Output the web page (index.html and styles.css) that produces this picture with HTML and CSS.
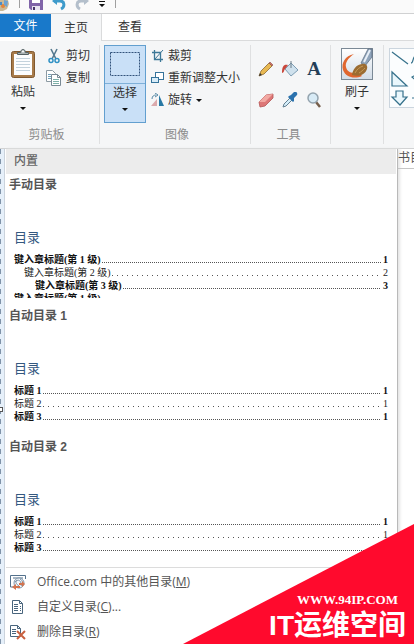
FILE: index.html
```
<!DOCTYPE html>
<html lang="zh-CN">
<head>
    <meta charset="UTF-8">
    <title>目录</title>
    <link rel="stylesheet" href="styles.css">
</head>
<body>

<div class="app">
    <div class="quickbar">
        <svg class="quick-palette" width="10" height="12" viewBox="0 0 10 12">
            <path d="M0 0h8l1 4-2 5-4 2H0z" fill="#c9b896"/>
            <circle cx="3" cy="6" r="2" fill="#e0853c"/>
            <path d="M4 0l4 1-1 6-3-2z" fill="#6da3d2"/>
            <path d="M0 2h2v3H0z" fill="#4a8cc8"/>
        </svg>
        <span class="quick-line"></span>
        <button class="quick-btn" aria-label="保存">
            <svg width="14" height="12" viewBox="0 0 14 12">
                <path d="M0 0h14v10H2L0 8z" fill="#8064a8"/>
                <path d="M3 0h8v3H3z" fill="#fff"/>
                <path d="M3 6h8v4H3z" fill="#e8e4f0"/>
                <path d="M4 7h2v3H4z" fill="#453368"/>
            </svg>
        </button>
        <button class="quick-btn" aria-label="撤消">
            <svg width="14" height="12" viewBox="0 0 14 12">
                <path d="M2 1h6c5 0 5 6 1 8" fill="none" stroke="#3f9bcb" stroke-width="3"/>
                <path d="M0 1l5-4v8z" fill="#3f9bcb"/>
            </svg>
        </button>
        <button class="quick-btn" aria-label="重做">
            <svg width="14" height="12" viewBox="0 0 14 12">
                <path d="M12 1H6C1 1 1 7 5 9" fill="none" stroke="#b4bfcb" stroke-width="3"/>
                <path d="M14 1L9-3v8z" fill="#b4bfcb"/>
            </svg>
        </button>
        <button class="quick-btn" aria-label="自定义快速访问工具栏">
            <svg width="8" height="8" viewBox="0 0 8 8"><path d="M1 1h6v1H1zM1 4h6L4 7z" fill="#111"/></svg>
        </button>
        <span class="quick-line"></span>
    </div>

    <div class="tabs">
        <button class="tab file">文件</button>
        <button class="tab home">主页</button>
        <button class="tab view">查看</button>
    </div>

    <div class="ribbon">
        <div class="group clipboard">
            <div class="group-body">
                <button class="big-btn">
                    <svg class="big-icon" width="26" height="32" viewBox="0 0 26 32">
                        <rect x="1.500" y="3.500" width="23" height="26" rx="2" fill="#a87b4a" stroke="#80592f"/>
                        <path d="M4 6h18v21H4z" fill="#fcfdfe"/>
                        <path d="M6 10.500h14M6 13.500h14M6 16.500h14M6 19.500h14M6 22.500h14" stroke="#c3d2dc"/>
                        <path d="M7.500 6.500V4.500h3c0-4 5-4 5 0h3v2z" fill="#a9b2b3" stroke="#566264"/>
                        <circle cx="13" cy="3.500" r="1" fill="#fff"/>
                    </svg>
                    <span class="big-text">粘贴</span>
                    <span class="caret"></span>
                </button>
                <div class="rows">
                    <button class="row-btn">
                        <svg width="16" height="16" viewBox="0 0 16 16">
                            <path d="M5 1l5 10M11 1L6 11" stroke="#54798f" stroke-width="1.600"/>
                            <circle cx="5" cy="12.500" r="2" fill="none" stroke="#2f91c4" stroke-width="1.500"/>
                            <circle cx="11" cy="12.500" r="2" fill="none" stroke="#2f91c4" stroke-width="1.500"/>
                        </svg>
                        剪切
                    </button>
                    <button class="row-btn">
                        <svg width="16" height="16" viewBox="0 0 16 16">
                            <path d="M.5 .5h6l3 3v8h-9z" fill="#fff" stroke="#8c9aa3"/>
                            <path d="M2 4.500h3M2 6.500h3M2 8.500h3" stroke="#6fa1bb"/>
                            <path d="M5.500 4.500h6l3 3v8h-9z" fill="#fff" stroke="#788994"/>
                            <path d="M11.500 4.500v3h3" fill="none" stroke="#788994"/>
                            <path d="M7 9.500h6M7 11.500h6M7 13.500h6" stroke="#7db0a8"/>
                        </svg>
                        复制
                    </button>
                </div>
            </div>
            <div class="group-name">剪贴板</div>
        </div>

        <div class="group image">
            <div class="group-body">
                <button class="select-btn">
                    <span class="select-top">
                        <svg width="30" height="24" viewBox="0 0 30 24">
                            <rect x=".5" y=".5" width="29" height="23" fill="none" stroke="#31527a" stroke-dasharray="2 1"/>
                        </svg>
                    </span>
                    <span class="big-text">选择</span>
                    <span class="caret"></span>
                </button>
                <div class="rows">
                    <button class="row-btn">
                        <svg width="13" height="14" viewBox="0 0 13 14">
                            <path d="M3.500 1v9.500H12M1 3.500h8.500V13" fill="none" stroke="#3d7897" stroke-width="1.300"/>
                            <path d="M4 10l8-9" stroke="#3d7897"/>
                        </svg>
                        裁剪
                    </button>
                    <button class="row-btn">
                        <svg width="13" height="14" viewBox="0 0 13 14">
                            <rect x="4.500" y="1.500" width="8" height="7" fill="#fff" stroke="#35739a"/>
                            <rect x=".5" y="6.500" width="7" height="5" fill="#d8ecf8" stroke="#35739a"/>
                        </svg>
                        重新调整大小
                    </button>
                    <button class="row-btn">
                        <svg width="13" height="14" viewBox="0 0 13 14">
                            <path d="M6 6v7H0z" fill="#dba9ac"/>
                            <path d="M8 2v11h5z" fill="#2878a4"/>
                            <path d="M1 6c0-3 2-4 4-4M4 0l3 2-3 2" fill="none" stroke="#5588a5"/>
                        </svg>
                        旋转
                        <span class="caret"></span>
                    </button>
                </div>
            </div>
            <div class="group-name">图像</div>
        </div>

        <div class="group tools">
            <div class="group-body tool-grid">
                <button aria-label="铅笔">
                    <svg width="16" height="16" viewBox="0 0 16 16">
                        <path d="M1 15l2-5 8-8 3 3-8 8z" fill="#e8b953" stroke="#8c6a32" stroke-width=".8"/>
                        <path d="M11 2l1-1 3 3-1 1z" fill="#cf7066" stroke="#8c514a" stroke-width=".6"/>
                        <path d="M1 15l1-3 2 2z" fill="#333"/>
                    </svg>
                </button>
                <button aria-label="填充">
                    <svg width="16" height="16" viewBox="0 0 16 16">
                        <path d="M9 2l7 7-7 6-6-7z" fill="#cfe1ed" stroke="#7d9db3"/>
                        <path d="M9 0v7" stroke="#6b7d88"/>
                        <path d="M6 4C2 3 0 5 0 12c2 0 2-3 3-4z" fill="#c9473b"/>
                    </svg>
                </button>
                <button class="letter" aria-label="文本">A</button>
                <button aria-label="橡皮擦">
                    <svg width="16" height="16" viewBox="0 0 16 16">
                        <path d="M1 10l7-7 7-1v4l-8 8-5 1z" fill="#dd7777" stroke="#b25555" stroke-width=".8"/>
                        <path d="M1 10l7-7 7-1-8 8z" fill="#f2a9a3"/>
                    </svg>
                </button>
                <button aria-label="取色器">
                    <svg width="16" height="16" viewBox="0 0 16 16">
                        <path d="M1 15l1-3 6-6 2 2-6 6z" fill="#d4edf9" stroke="#637f91"/>
                        <path d="M7 4l2-1 3-3c2-1 4 1 3 3l-3 3 0 3-1 1-5-5z" fill="#2b72ae"/>
                    </svg>
                </button>
                <button aria-label="放大镜">
                    <svg width="16" height="16" viewBox="0 0 16 16">
                        <path d="M10 10l4 5" stroke="#755e4b" stroke-width="2.500"/>
                        <circle cx="7" cy="6" r="5" fill="#d8ebf6" stroke="#93a3ae" stroke-width="1.500"/>
                    </svg>
                </button>
            </div>
            <div class="group-name">工具</div>
        </div>

        <div class="group brushes">
            <button class="big-btn">
                <svg class="big-icon" width="32" height="32" viewBox="0 0 32 32">
                    <defs>
                        <linearGradient id="sky" x1="0" y1="0" x2="0" y2="1">
                            <stop offset="0" stop-color="#fff"/>
                            <stop offset="1" stop-color="#d2dce7"/>
                        </linearGradient>
                    </defs>
                    <rect x=".5" y=".5" width="31" height="31" fill="url(#sky)" stroke="#7b8996"/>
                    <path d="M13 6C4 8 0 15 2 22c3 8 12 9 19 6l-4-4c-6 2-11 0-12-5-1-4 2-9 8-13z" fill="#e0662f"/>
                    <path d="M20 15l7-14h4v8l-7 9z" fill="#8fa4bb" stroke="#56677c" stroke-width=".7"/>
                    <path d="M23 14l6-12" stroke="#e7eef7" stroke-width="2"/>
                    <path d="M11 27c1-6 4-10 10-11 4-1 6 2 5 5-2 6-8 8-15 6z" fill="#9b6c32"/>
                    <path d="M14 25c2-4 5-6 8-7M18 25c2-1 4-3 6-5" stroke="#c69b57" fill="none"/>
                </svg>
                <span class="big-text">刷子</span>
                <span class="caret"></span>
            </button>
        </div>

        <div class="group shapes">
            <svg class="gallery" width="40" height="60" viewBox="0 0 40 60">
                <rect x=".5" y=".5" width="50" height="59" fill="#fbfdfe" stroke="#cbd5de"/>
                <g fill="#eaf7fc" stroke="#35718b" stroke-width="1.200">
                    <path d="M3 4l16 12M3 24v14h15z"/>
                    <path d="M7 43h7v6h4l-7 8-8-8h4z"/>
                    <path d="M27 8c-4 0-2 7-5 7M30 25l-7 4 7 6M30 50h-7" fill="none"/>
                </g>
            </svg>
        </div>
    </div>

    <div class="workspace">
        <div class="ruler"><span class="handle"></span></div>
        <div class="menu">
            <div class="menu-head">内置</div>

            <button class="toc">
                <span class="toc-name">手动目录</span>
                <span class="toc-title">目录</span>
                <span class="toc-line strong">键入章标题(第 1 级)<i class="dots"></i>1</span>
                <span class="toc-line level2">键入章标题(第 2 级)<i class="dots wide"></i>2</span>
                <span class="toc-line strong level3">键入章标题(第 3 级)<i class="dots"></i>3</span>
                <span class="toc-line strong cut">键入章标题(第 1 级)</span>
            </button>

            <button class="toc">
                <span class="toc-name">自动目录 1</span>
                <span class="toc-title">目录</span>
                <span class="toc-line strong">标题 1<i class="dots"></i>1</span>
                <span class="toc-line">标题 2<i class="dots wide"></i>1</span>
                <span class="toc-line strong">标题 3<i class="dots"></i>1</span>
            </button>

            <button class="toc">
                <span class="toc-name">自动目录 2</span>
                <span class="toc-title">目录</span>
                <span class="toc-line strong">标题 1<i class="dots"></i>1</span>
                <span class="toc-line">标题 2<i class="dots wide"></i>1</span>
                <span class="toc-line strong">标题 3<i class="dots"></i>1</span>
            </button>

            <div class="commands">
                <button class="command">
                    <svg width="16" height="16" viewBox="0 0 16 16">
                        <path d="M.5 13V1.500h15V5M.5 13H3M3 4h10" fill="none" stroke="#53718c"/>
                        <circle cx="9" cy="9" r="5" fill="#f4f7fa" stroke="#7e95a9"/>
                        <path d="M5 8c3-3 5-2 6 1M7 6c-2 2-1 4 2 6M10 5c3 2 3 4 1 7" fill="none" stroke="#7e95a9"/>
                        <path d="M2 13l4-3v2h4v2H6v2zM15 10l-3-3v2H9v2h3v2z" fill="#d27450"/>
                    </svg>
                    <span>Office.com 中的其他目录(<u>M</u>)</span>
                </button>
                <button class="command">
                    <svg width="16" height="16" viewBox="0 0 16 16">
                        <path d="M2.500 1.500h7l3 3v10h-10z" fill="#fff" stroke="#49657d"/>
                        <path d="M9.500 1.500v3h3" fill="none" stroke="#49657d"/>
                        <path d="M4 5.500h4M4 7.500h4M4 9.500h4M4 11.500h4M10 7.500h1M10 9.500h1M10 11.500h1" stroke="#49657d"/>
                    </svg>
                    <span>自定义目录(<u>C</u>)...</span>
                </button>
                <button class="command">
                    <svg width="16" height="16" viewBox="0 0 16 16">
                        <path d="M.5 1.500h7l3 3v8H.5z" fill="#fff" stroke="#49657d"/>
                        <path d="M7.500 1.500v3h3M2 5.500h4M2 7.500h4M2 9.500h4" fill="none" stroke="#49657d"/>
                        <path d="M7 7l8 8M15 7l-8 8" stroke="#c8603f" stroke-width="2"/>
                    </svg>
                    <span>删除目录(<u>R</u>)</span>
                </button>
            </div>
        </div>
        <div class="page"><div class="page-tab">书目</div></div>
    </div>

    <div class="badge">
        <div class="badge-url">WWW.94IP.COM</div>
        <div class="badge-name">IT运维空间</div>
    </div>
</div>

</body>
</html>
```
FILE: styles.css
```
* {
    box-sizing: border-box;
}

body {
    margin: 0;
    font-family: "Liberation Sans", "Noto Sans CJK SC", sans-serif;
    font-size: 12px;
    line-height: 16px;
    color: #333;
}

button {
    margin: 0;
    padding: 0;
    border: none;
    background: none;
    font: inherit;
    color: inherit;
}

svg {
    display: block;
    flex: none;
}

.app {
    position: relative;
    display: flex;
    flex-direction: column;
    height: 100vh;
    overflow: hidden;
    background: #fff;
}

/* quick access bar */
.quickbar {
    display: flex;
    flex: none;
    gap: 9px;
    height: 14px;
    background: #fafafa;
    border-bottom: 1px solid #d0d1d2;
    overflow: hidden;
}

.quick-btn {
    display: flex;
    align-items: flex-start;
}

.quick-line {
    width: 1px;
    height: 8px;
    background: #a0a0a0;
}

/* tabs */
.tabs {
    display: flex;
    flex: none;
    height: 27px;
}

.tab {
    width: 51px;
    height: 27px;
}

.file {
    height: 23px;
    background: #1979ca;
    color: #fff;
}

.home {
    background: #f5f6f7;
    border-right: 1px solid #dadbdc;
}

.view {
    flex: 1;
    padding-left: 16px;
    border-bottom: 1px solid #dadbdc;
    text-align: left;
}

/* ribbon */
.ribbon {
    display: flex;
    flex: none;
    height: 108px;
    padding-top: 4px;
    background: #f5f6f7;
    border-bottom: 1px solid #d2d3d4;
    overflow: hidden;
}

.group {
    display: flex;
    flex: none;
    flex-direction: column;
    height: 99px;
    border-right: 1px solid #dfe0e1;
}

.group-body {
    display: flex;
    height: 82px;
}

.group-name {
    padding-top: 2px;
    line-height: 18px;
    text-align: center;
    color: #8c8c8c;
}

.clipboard {
    width: 100px;
}

.clipboard .group-name {
    padding-right: 6px;
}

.image {
    width: 151px;
    padding-left: 4px;
}

.tools {
    width: 80px;
}

.tools .group-name {
    padding-right: 4px;
}

.brushes {
    width: 53px;
    align-items: center;
}

.shapes {
    padding: 3px 0 0 5px;
    border: none;
}

.big-btn,
.select-btn {
    display: flex;
    flex-direction: column;
    align-items: center;
    width: 42px;
    height: 78px;
}

.clipboard .big-btn {
    width: 46px;
}

.big-icon {
    margin-top: 3px;
}

.big-text {
    margin-top: 4px;
}

.big-btn .caret,
.select-btn .caret {
    margin-top: 7px;
}

.select-btn {
    background: #c9e0f7;
    border: 1px solid #629fcf;
}

.select-top {
    display: flex;
    justify-content: center;
    width: 100%;
    height: 38px;
    padding-top: 6px;
    border-bottom: 1px solid #7fb0d8;
}

.select-btn .big-text {
    margin-top: 1px;
}

.caret {
    width: 0;
    border: 3px solid transparent;
    border-top-color: #111;
    border-bottom: none;
}

.rows {
    display: flex;
    flex-direction: column;
}

.row-btn {
    display: flex;
    align-items: center;
    gap: 4px;
    height: 22px;
    white-space: nowrap;
}

.image .rows {
    padding-left: 5px;
}

.tool-grid {
    display: grid;
    grid-template-columns: repeat(3, 24px);
    grid-template-rows: 31px 31px;
    align-content: start;
    padding: 8px 0 0 3px;
}

.tool-grid button {
    display: flex;
    align-items: center;
    justify-content: center;
}

.tool-grid .letter {
    font: bold 19px "Liberation Serif", serif;
    color: #243e57;
}

/* document area under the ribbon */
.workspace {
    display: flex;
    flex: 1;
    min-height: 0;
}

.ruler {
    position: relative;
    flex: none;
    width: 5px;
    background: repeating-linear-gradient(#8093a8 0 5px, #e6f0fa 5px 10px) 0 0 / 1px 100% no-repeat #e6f0fa;
    border-right: 1px solid #cbd3dc;
}

.handle {
    position: absolute;
    top: 258px;
    left: -2px;
    width: 5px;
    height: 5px;
    background: #fff;
    border: 1px solid #555;
}

.menu {
    flex: 1;
    min-width: 0;
    padding-left: 1px;
    border-right: 1px solid #b9b9b9;
    box-shadow: 2px 0 3px #e4e4e4;
}

.menu-head {
    height: 25px;
    margin-right: 1px;
    padding-left: 8px;
    background: #ececec;
    line-height: 24px;
    font-weight: 500;
    color: #666;
}

.toc {
    display: flex;
    flex-direction: column;
    width: 100%;
    height: 131px;
    padding: 3px 9px 0 8px;
    text-align: left;
}

.toc-name {
    margin-left: -5px;
    font-weight: bold;
    color: #555;
}

.toc-title {
    margin: 35px 0 5px;
    font-size: 13px;
    line-height: 20px;
    color: #34587f;
}

.toc-line {
    display: flex;
    flex: none;
    height: 13px;
    font-family: "Liberation Serif", "Noto Sans CJK SC", serif;
    font-size: 10px;
    line-height: 13px;
    color: #222;
}

.strong {
    font-weight: bold;
    color: #111;
}

.level2 {
    padding-left: 10px;
}

.level3 {
    padding-left: 21px;
}

/* the preview ends in the middle of this line */
.cut {
    height: 6px;
    overflow: hidden;
}

.dots {
    flex: 1;
    height: 1px;
    margin: 9px 2px 0 1px;
    background: repeating-linear-gradient(90deg, #555 0 1px, transparent 1px 2px);
}

.dots.wide {
    background: repeating-linear-gradient(90deg, #555 0 1px, transparent 1px 5px);
}

.commands {
    display: flex;
    flex-direction: column;
    padding-top: 1px;
    border-top: 1px solid #dcdcdc;
}

.command {
    display: flex;
    align-items: center;
    gap: 11px;
    height: 25px;
    padding-left: 4px;
    font-family: "Open Sans", "Noto Sans CJK SC", sans-serif;
    color: #555;
}

.page {
    flex: none;
    width: 16px;
    overflow: hidden;
}

.page-tab {
    height: 20px;
    border-bottom: 1px solid #c6c6c6;
    line-height: 18px;
    white-space: nowrap;
    color: #555;
}

/* corner badge */
.badge {
    position: absolute;
    right: 0;
    bottom: 0;
    width: 231px;
    height: 120px;
    padding: 68px 8px 0 0;
    background: #ff0a2d;
    clip-path: polygon(100% 0, 100% 100%, 0 100%);
    color: #fff;
    font-weight: bold;
    text-align: right;
}

.badge-url {
    padding-right: 8px;
    font-family: "Liberation Serif", serif;
    font-size: 13px;
}

.badge-name {
    font-size: 28px;
    line-height: 36px;
}
```
